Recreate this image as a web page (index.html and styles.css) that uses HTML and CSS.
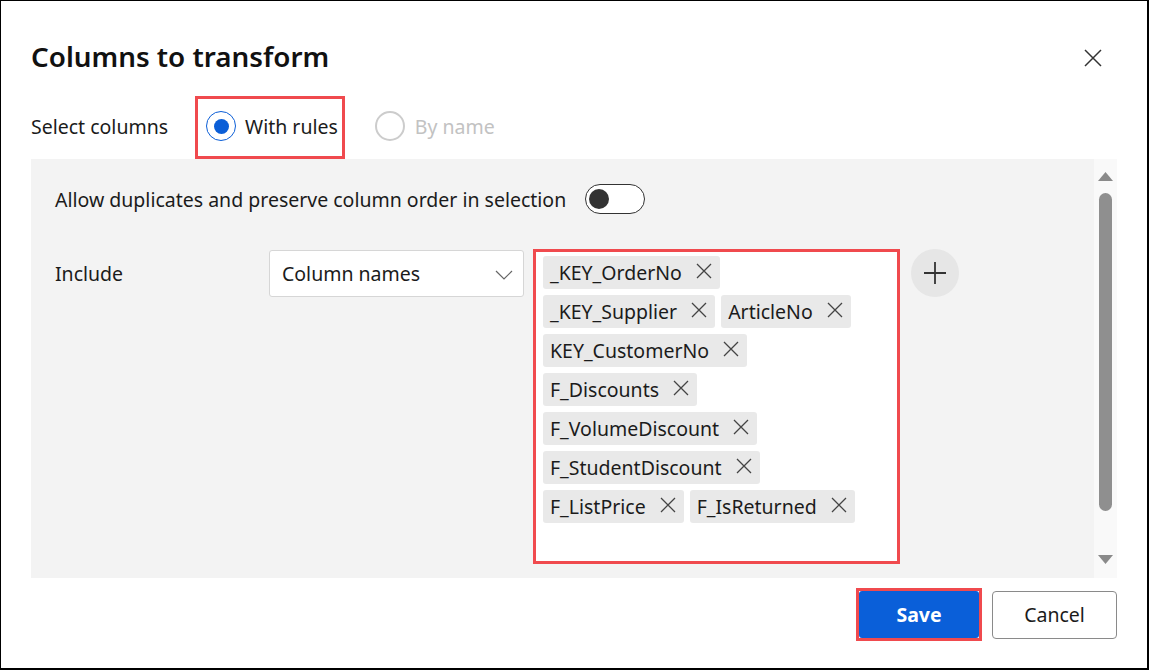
FILE: index.html
```html
<!DOCTYPE html>
<html lang="en">
<head>
<meta charset="utf-8">
<title>Columns to transform</title>
<link rel="stylesheet" href="styles.css">
</head>
<body>
<div class="dialog">
  <header class="header">
    <h1 class="title">Columns to transform</h1>
    <button class="close" aria-label="Close">
      <svg width="18" height="18" viewBox="0 0 18 18"><path d="M1 1 L17 17 M17 1 L1 17" stroke="#333" stroke-width="1.5" fill="none"/></svg>
    </button>
  </header>

  <div class="select-row">
    <span class="select-label">Select columns</span>
    <label class="radio highlight"><span class="radio-circle checked"><span class="dot"></span></span>With rules</label>
    <label class="radio disabled"><span class="radio-circle"></span>By name</label>
  </div>

  <div class="panel">
    <div class="panel-body">
      <div class="toggle-row">
        <span>Allow duplicates and preserve column order in selection</span>
        <span class="toggle"><span class="knob"></span></span>
      </div>
      <div class="include-row">
        <span class="include-label">Include</span>
        <div class="dropdown">
          <span>Column names</span>
          <svg class="chevron" width="18" height="10" viewBox="0 0 18 10"><path d="M1 1 L9 9 L17 1" stroke="#666" stroke-width="1.2" fill="none"/></svg>
        </div>
        <div class="tagbox">
          <div class="tag-row"><span class="tag">_KEY_OrderNo<svg class="x" viewBox="0 0 16 16"><path d="M1 1 L15 15 M15 1 L1 15"/></svg></span></div>
          <div class="tag-row"><span class="tag">_KEY_Supplier<svg class="x" viewBox="0 0 16 16"><path d="M1 1 L15 15 M15 1 L1 15"/></svg></span><span class="tag">ArticleNo<svg class="x" viewBox="0 0 16 16"><path d="M1 1 L15 15 M15 1 L1 15"/></svg></span></div>
          <div class="tag-row"><span class="tag">KEY_CustomerNo<svg class="x" viewBox="0 0 16 16"><path d="M1 1 L15 15 M15 1 L1 15"/></svg></span></div>
          <div class="tag-row"><span class="tag">F_Discounts<svg class="x" viewBox="0 0 16 16"><path d="M1 1 L15 15 M15 1 L1 15"/></svg></span></div>
          <div class="tag-row"><span class="tag">F_VolumeDiscount<svg class="x" viewBox="0 0 16 16"><path d="M1 1 L15 15 M15 1 L1 15"/></svg></span></div>
          <div class="tag-row"><span class="tag">F_StudentDiscount<svg class="x" viewBox="0 0 16 16"><path d="M1 1 L15 15 M15 1 L1 15"/></svg></span></div>
          <div class="tag-row"><span class="tag">F_ListPrice<svg class="x" viewBox="0 0 16 16"><path d="M1 1 L15 15 M15 1 L1 15"/></svg></span><span class="tag">F_IsReturned<svg class="x" viewBox="0 0 16 16"><path d="M1 1 L15 15 M15 1 L1 15"/></svg></span></div>
        </div>
        <button class="add" aria-label="Add">
          <svg width="24" height="24" viewBox="0 0 24 24"><path d="M12 1 V23 M1 12 H23" stroke="#333" stroke-width="1.8" fill="none"/></svg>
        </button>
      </div>
    </div>
    <div class="scrollbar">
      <svg class="arrow" width="15" height="9" viewBox="0 0 15 9"><polygon points="7.5,0 15,9 0,9" fill="#8a8a8a"/></svg>
      <span class="thumb"></span>
      <span class="spacer"></span>
      <svg class="arrow" width="15" height="9" viewBox="0 0 15 9"><polygon points="0,0 15,0 7.5,9" fill="#8a8a8a"/></svg>
    </div>
  </div>

  <footer class="footer">
    <span class="save-wrap"><button class="btn primary">Save</button></span>
    <button class="btn secondary">Cancel</button>
  </footer>
</div>
</body>
</html>
```

FILE: styles.css
```css
* { box-sizing: border-box; }

html, body {
  margin: 0;
  padding: 0;
  background: #ffffff;
}

body {
  font-family: "Noto Sans", "Open Sans", sans-serif;
  font-size: 19.5px;
  color: #1b1b1b;
}

.dialog {
  width: 1149px;
  height: 670px;
  border-style: solid;
  border-color: #000;
  border-width: 1px 2px 2px 1px;
  padding: 0 30px 0 30px;
  display: flex;
  flex-direction: column;
  background: #fff;
}

.header {
  margin-top: 31px;
  height: 50px;
  display: flex;
  align-items: center;
  justify-content: space-between;
}

.title {
  margin: 0;
  font-size: 27.8px;
  font-weight: 600;
  color: #111;
  padding-bottom: 3px;
}

.close {
  border: none;
  background: none;
  padding: 0;
  margin-right: 15px;
  margin-top: 2px;
  width: 18px;
  height: 18px;
  display: flex;
}

.select-row {
  margin-top: 14px;
  height: 63px;
  display: flex;
  align-items: center;
}

.select-label {
  width: 164px;
  padding-bottom: 3px;
}

.radio {
  display: flex;
  align-items: center;
  gap: 9px;
  height: 63px;
  padding-bottom: 3px;
}

.radio.highlight {
  border: 3px solid #f04a4e;
  padding: 0 4px 3px 8px;
}

.radio.disabled {
  margin-left: 30px;
  color: #c2c2c2;
  gap: 10px;
}

.radio-circle {
  width: 30px;
  height: 30px;
  border-radius: 50%;
  border: 2px solid #cccccc;
  display: flex;
  align-items: center;
  justify-content: center;
  background: #fff;
}

.radio-circle.checked {
  border: 1.5px solid #0b5ed7;
}

.radio-circle .dot {
  width: 15px;
  height: 15px;
  border-radius: 50%;
  background: #0b5ed7;
}

.panel {
  height: 419px;
  display: flex;
  background: #f3f3f3;
}

.panel-body {
  flex: 1;
  padding: 25px 0 0 24px;
}

.toggle-row {
  display: flex;
  align-items: center;
  gap: 19px;
  height: 30px;
}

.toggle {
  width: 60px;
  height: 30px;
  border: 1.5px solid #333;
  border-radius: 15px;
  background: #fff;
  display: flex;
  align-items: center;
  padding-left: 3px;
}

.knob {
  width: 20px;
  height: 20px;
  border-radius: 50%;
  background: #333;
}

.include-row {
  margin-top: 35px;
  display: flex;
  align-items: flex-start;
}

.include-label {
  width: 214px;
  height: 48px;
  line-height: 48px;
  margin-top: 1px;
}

.dropdown {
  margin-top: 1px;
  width: 255px;
  height: 47px;
  background: #fff;
  border: 1px solid #d6d6d6;
  border-radius: 3px;
  display: flex;
  align-items: center;
  justify-content: space-between;
  padding: 0 10px 0 12px;
}

.chevron {
  margin-top: 2px;
}

.tagbox {
  margin-left: 9px;
  width: 367px;
  height: 315px;
  border: 3px solid #f04a4e;
  background: #fff;
  padding: 4px 6px 0 7px;
  display: flex;
  flex-direction: column;
  gap: 6px;
}

.tag-row {
  display: flex;
  gap: 6px;
}

.tag {
  height: 33px;
  display: inline-flex;
  align-items: center;
  gap: 14px;
  padding: 0 8px 0 7px;
  background: #e9e9e9;
  border-radius: 3px;
  color: #1b1b1b;
  white-space: nowrap;
}

.tag .x {
  width: 16px;
  height: 16px;
  margin-top: -4px;
  stroke: #444;
  stroke-width: 1.3;
  fill: none;
}

.add {
  margin-left: 11px;
  width: 48px;
  height: 48px;
  border-radius: 50%;
  border: none;
  background: #e6e6e6;
  display: flex;
  align-items: center;
  justify-content: center;
  padding: 0;
}

.scrollbar {
  width: 23px;
  background: #f9f9f9;
  display: flex;
  flex-direction: column;
  align-items: center;
  padding: 13px 0 14px;
}

.arrow {
  display: block;
  flex: none;
}

.thumb {
  margin-top: 12px;
  width: 13px;
  height: 318px;
  border-radius: 7px;
  background: #8f8f8f;
}

.spacer {
  flex: 1;
}

.footer {
  margin-top: 10px;
  display: flex;
  justify-content: flex-end;
  align-items: center;
  gap: 10px;
}

.save-wrap {
  border: 3px solid #f04a4e;
  display: flex;
}

.btn {
  font-family: "Noto Sans", "Open Sans", sans-serif;
  font-size: 19.5px;
  height: 47px;
  border-radius: 3px;
  cursor: pointer;
}

.btn.primary {
  width: 120px;
  background: #0a5fd9;
  color: #fff;
  font-weight: 700;
  border: none;
}

.btn.secondary {
  width: 125px;
  height: 48px;
  background: #fff;
  color: #1b1b1b;
  border: 1px solid #8a8a8a;
  border-radius: 4px;
}
```
